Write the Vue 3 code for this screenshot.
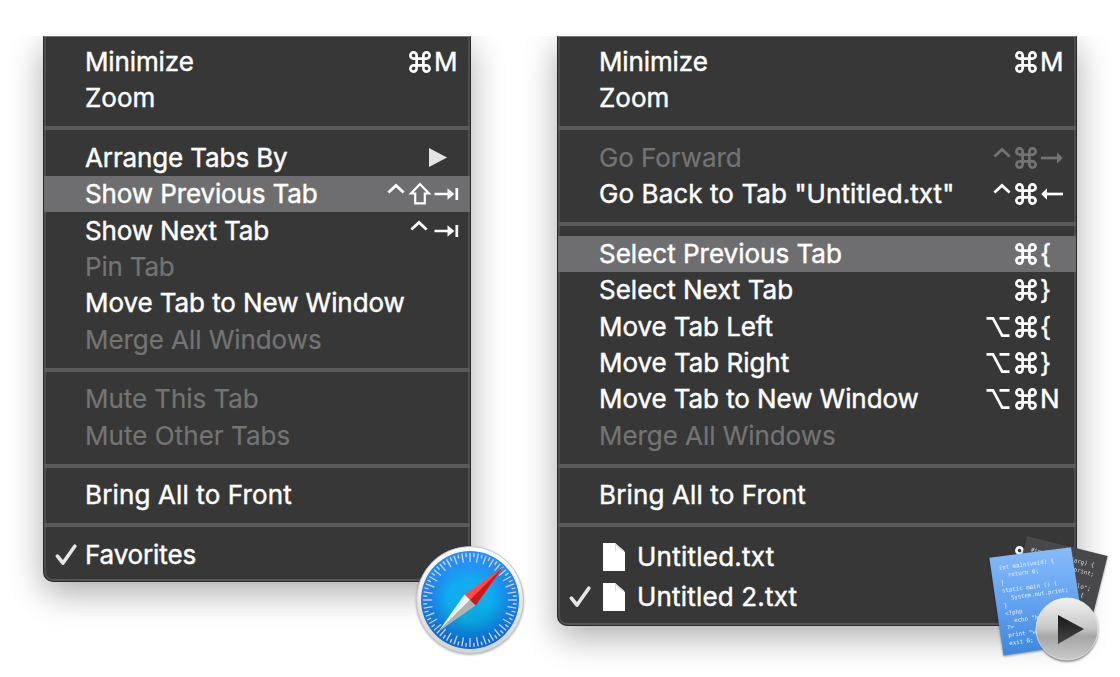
<script setup>
// s is the tracking of a label, in hundredths of a pixel
const left = [
  [{ t: 'Minimize', s: -12, mods: ['cmd'], k: 'M' }, { t: 'Zoom' }],
  [
    { t: 'Arrange Tabs By', s: -12, sub: true },
    { t: 'Show Previous Tab', s: -12, mods: ['ctrl', 'shift'], icon: 'tab', on: true },
    { t: 'Show Next Tab', s: -15, mods: ['ctrl'], icon: 'tab' },
    { t: 'Pin Tab', s: -20, off: true },
    { t: 'Move Tab to New Window', s: -8 },
    { t: 'Merge All Windows', s: -6, off: true },
  ],
  [{ t: 'Mute This Tab', s: -6, off: true }, { t: 'Mute Other Tabs', s: 4, off: true }],
  [{ t: 'Bring All to Front', s: 13 }],
  [{ t: 'Favorites', s: -14, check: true }],
]
const right = [
  [{ t: 'Minimize', s: -12, mods: ['cmd'], k: 'M' }, { t: 'Zoom' }],
  [
    { t: 'Go Forward', s: -8, off: true, mods: ['ctrl', 'cmd'], icon: 'right' },
    { t: 'Go Back to Tab "Untitled.txt"', s: 8, mods: ['ctrl', 'cmd'], icon: 'left' },
  ],
  [
    { t: 'Select Previous Tab', mods: ['cmd'], k: '{', on: true },
    { t: 'Select Next Tab', mods: ['cmd'], k: '}' },
    { t: 'Move Tab Left', s: -8, mods: ['opt', 'cmd'], k: '{' },
    { t: 'Move Tab Right', s: -4, mods: ['opt', 'cmd'], k: '}' },
    { t: 'Move Tab to New Window', s: -8, mods: ['opt', 'cmd'], k: 'N' },
    { t: 'Merge All Windows', s: -6, off: true },
  ],
  [{ t: 'Bring All to Front', s: 13 }],
  [
    { t: 'Untitled.txt', s: 24, file: true, mods: ['cmd'] },
    { t: 'Untitled 2.txt', s: 18, file: true, check: true },
  ],
]
const menus = [{ id: 'browser', groups: left }, { id: 'editor', groups: right }]
const glyphs = {
  cmd: { w: 22, d: 'M7.6 7.6H14.4V14.4H7.6ZM7.6 7.6H4.7A3.1 3.1 0 1 1 7.6 4.5ZM14.4 7.6V4.5A3.1 3.1 0 1 1 17.3 7.6ZM14.4 14.4H17.3A3.1 3.1 0 1 1 14.4 17.5ZM7.6 14.4V17.5A3.1 3.1 0 1 1 4.7 14.4Z' },
  ctrl: { w: 18, d: 'M1.4 9.6L9 2.4L16.6 9.6' },
  shift: { w: 22, d: 'M11 1.2L20 10.5H15.8V20.3H6.2V10.5H2Z', sw: 2.2 },
  opt: { w: 24, d: 'M0.5 2.3H7L16.2 19.7H23.5M13.5 2.3H23.5' },
  tab: { w: 24, d: 'M0.5 11H17M22.8 5V17', f: 'M13.5 5.3L20.3 11L13.5 16.7Z' },
  right: { w: 24, d: 'M1 11H17.5', f: 'M17 5.3L22.8 11L17 16.7Z' },
  left: { w: 24, d: 'M6.5 11H23', f: 'M7 5.3L1.2 11L7 16.7Z' },
}
const ticks = Array.from({ length: 72 }, (_, i) => ({ a: i * 5, y: i % 2 ? 13 : 18 }))
</script>

<template>
  <main class="scene">
    <section v-for="m in menus" :key="m.id" class="wrap" :class="m.id">
      <div class="menu">
        <div v-for="(g, gi) in m.groups" :key="gi" class="group">
          <div v-for="r in g" :key="r.t" class="row" :class="{ on: r.on, off: r.off, tall: r.file }">
            <span class="mark">
              <svg v-if="r.check" width="22" height="22" viewBox="0 0 22 22"><path d="M2.4 12.2L8 19L19.8 2.2" fill="none" stroke="#e6e6e6" stroke-width="3.6" stroke-linecap="round" stroke-linejoin="round" /></svg>
            </span>
            <svg v-if="r.file" class="file" width="22" height="28" viewBox="0 0 22 28"><path d="M0 0H12L22 9V28H0Z" fill="#fff" /><path d="M12 0V8H21.5" fill="#ddd" /><path d="M13 3V8H19Z" fill="#fff" /></svg>
            <span class="label" :style="{ letterSpacing: (r.s || 0) / 100 + 'px' }">{{ r.t }}</span>
            <span v-if="r.mods" class="keys">
              <svg v-for="k in r.mods" :key="k" :class="k" :width="glyphs[k].w" height="22" :viewBox="`0 0 ${glyphs[k].w} 22`"><path :d="glyphs[k].d" fill="none" stroke="currentColor" :stroke-width="glyphs[k].sw || 2.7" /></svg>
              <span class="key">
                <svg v-if="r.icon" width="24" height="22" viewBox="0 0 24 22"><path :d="glyphs[r.icon].d" fill="none" stroke="currentColor" stroke-width="2.7" /><path :d="glyphs[r.icon].f" fill="currentColor" /></svg>
                <template v-else>{{ r.k }}</template>
              </span>
            </span>
            <svg v-if="r.sub" class="arrow" width="18" height="19" viewBox="0 0 18 19"><path d="M0 0L18 9.5L0 19Z" fill="#e4e4e4" /></svg>
          </div>
        </div>
      </div>

      <svg v-if="m.id === 'browser'" class="app safari" width="112" height="114" viewBox="0 0 112 114">
        <defs>
          <linearGradient id="rim" x2="0" y2="1"><stop offset="0" stop-color="#fff" /><stop offset="1" stop-color="#d4d4d4" /></linearGradient>
          <linearGradient id="dial" x2="0" y2="1"><stop offset="0" stop-color="#2b91fa" /><stop offset="1" stop-color="#0b67d0" /></linearGradient>
          <linearGradient id="core" x2="0" y2="1"><stop offset="0" stop-color="#18a6f6" /><stop offset=".5" stop-color="#0cb0ee" /><stop offset="1" stop-color="#0498c8" /></linearGradient>
          <radialGradient id="fade"><stop offset=".5" stop-color="#fff" /><stop offset="1" stop-color="#000" /></radialGradient>
          <mask id="soft"><circle cx="56" cy="56" r="42" fill="url(#fade)" /></mask>
        </defs>
        <circle cx="56" cy="56" r="53.5" fill="url(#rim)" stroke="#bdbdbd" stroke-width=".8" />
        <circle cx="56" cy="56" r="49" fill="url(#dial)" />
        <circle cx="56" cy="56" r="42" fill="url(#core)" mask="url(#soft)" />
        <path v-for="t in ticks" :key="t.a" :d="`M56 9V${t.y}`" :transform="`rotate(${t.a} 56 56)`" stroke="#c4d4e6" stroke-width="1.4" />
        <path d="M89 23L50.5 50.5L61.5 61.5Z" fill="#ff4a48" /><path d="M89 23L56 56L61.5 61.5Z" fill="#d01616" />
        <path d="M24 88L50.5 50.5L56 56Z" fill="#f1f1f1" /><path d="M24 88L56 56L61.5 61.5Z" fill="#b2b2b2" />
      </svg>

      <svg v-else class="app runner" width="124" height="132" viewBox="0 0 124 132">
        <defs>
          <linearGradient id="paper" x2="0" y2="1"><stop offset="0" stop-color="#86bbfa" /><stop offset=".5" stop-color="#64a3f0" /><stop offset="1" stop-color="#3e87dc" /></linearGradient>
          <linearGradient id="disc" x2="0" y2="1"><stop offset="0" stop-color="#f2f2f2" /><stop offset=".48" stop-color="#c8c8c8" /><stop offset=".62" stop-color="#a6a6a6" /><stop offset="1" stop-color="#cacaca" /></linearGradient>
          <linearGradient id="play" x2="0" y2="1"><stop offset="0" stop-color="#171717" /><stop offset="1" stop-color="#484848" /></linearGradient>
        </defs>
        <g transform="translate(42 10) rotate(14)">
          <path d="M0 0H83V92H0Z" fill="#48484a" />
          <g class="code dark">
            <text x="7" y="14">#include</text><text x="48" y="14">(arg) {</text><text x="50" y="23">.print;</text>
            <text x="57" y="38">llo";</text><text x="59" y="46">) {</text>
          </g>
        </g>
        <path d="M4.3 31.7L86 21.3L101 117L18.5 129.5Z" fill="url(#paper)" />
        <g class="code" transform="translate(14 44) rotate(-8)">
          <text x="0" y="0">int main(void) {</text><text x="8" y="8">return 0;</text><text x="0" y="15">}</text>
          <text x="0" y="23">static main () {</text><text x="8" y="31" textLength="58">System.out.print;</text><text x="0" y="38">}</text>
          <text x="0" y="46">&lt;?php</text><text x="8" y="54">echo "he</text><text x="0" y="60">?&gt;</text>
          <text x="0" y="68">print "w</text><text x="0" y="76">exit 0;</text>
        </g>
        <circle cx="82" cy="105" r="31" fill="#555" opacity=".25" />
        <circle cx="82" cy="103" r="31" fill="url(#disc)" stroke="#eee" stroke-width=".7" />
        <path d="M73 89L99 103L73 118Z" fill="url(#play)" />
      </svg>
    </section>
  </main>
</template>

<style>
body { margin: 0; background: #fff; overflow: hidden; }
</style>
<style scoped>
.scene { box-sizing: border-box; width: 1120px; height: 677px; padding: 36px 43px 0; display: flex; justify-content: space-between; align-items: flex-start; font-family: Inter, "Liberation Sans", sans-serif; }
.wrap { position: relative; clip-path: inset(0 -60px -90px -50px); }
.browser { width: 428px; }
.editor { width: 520px; }
.menu { box-sizing: border-box; background: #373737; border: 1px solid #292929; border-top-color: #777; border-radius: 0 0 10px 10px; box-shadow: inset 2px 0 #4d4d4d, inset -2px 0 #4d4d4d, inset 0 -2px #555, 0 11px 34px rgba(0, 0, 0, .33); padding: 6.8px 0 7.8px; }
.group + .group { border-top: 4px solid #5a5a5a; margin-top: 9.8px; padding-top: 9.3px; }
.row { height: 36.4px; display: flex; align-items: center; color: #fff; font-size: 26px; line-height: 36px; white-space: pre; }
.row.tall { height: 40.4px; }
.on { background: #6e6e70; }
.off { color: #747474; }
.mark { width: 30px; padding-left: 11px; height: 22px; display: flex; }
.label, .key { -webkit-text-stroke: .45px currentColor; }
.off .label { -webkit-text-stroke: .2px currentColor; }
.file { margin: 0 12px 0 4px; }
.keys { margin-left: auto; display: flex; align-items: center; }
.keys svg { display: block; overflow: visible; flex: none; }
.ctrl { margin-right: 4px; }
.opt { margin-right: 5px; }
.cmd, .shift { margin-right: 2px; }
.key { width: 37px; box-sizing: border-box; padding-left: 1px; }
.browser .ctrl:nth-last-child(2) { margin-right: 5px; }
.arrow { margin: 0 23px 0 auto; }
.app { position: absolute; overflow: visible; }
.safari { left: 371px; top: 508px; filter: drop-shadow(0 1px 1px rgba(0, 0, 0, .3)); }
.runner { left: 428px; top: 490px; filter: drop-shadow(0 1px 1px rgba(0, 0, 0, .4)); }
.code { font-family: "DejaVu Sans Mono", monospace; font-size: 5.8px; fill: #e4f0ff; -webkit-text-stroke: .2px #e4f0ff; }
.dark { fill: #ddd; -webkit-text-stroke-color: #ddd; }
</style>
